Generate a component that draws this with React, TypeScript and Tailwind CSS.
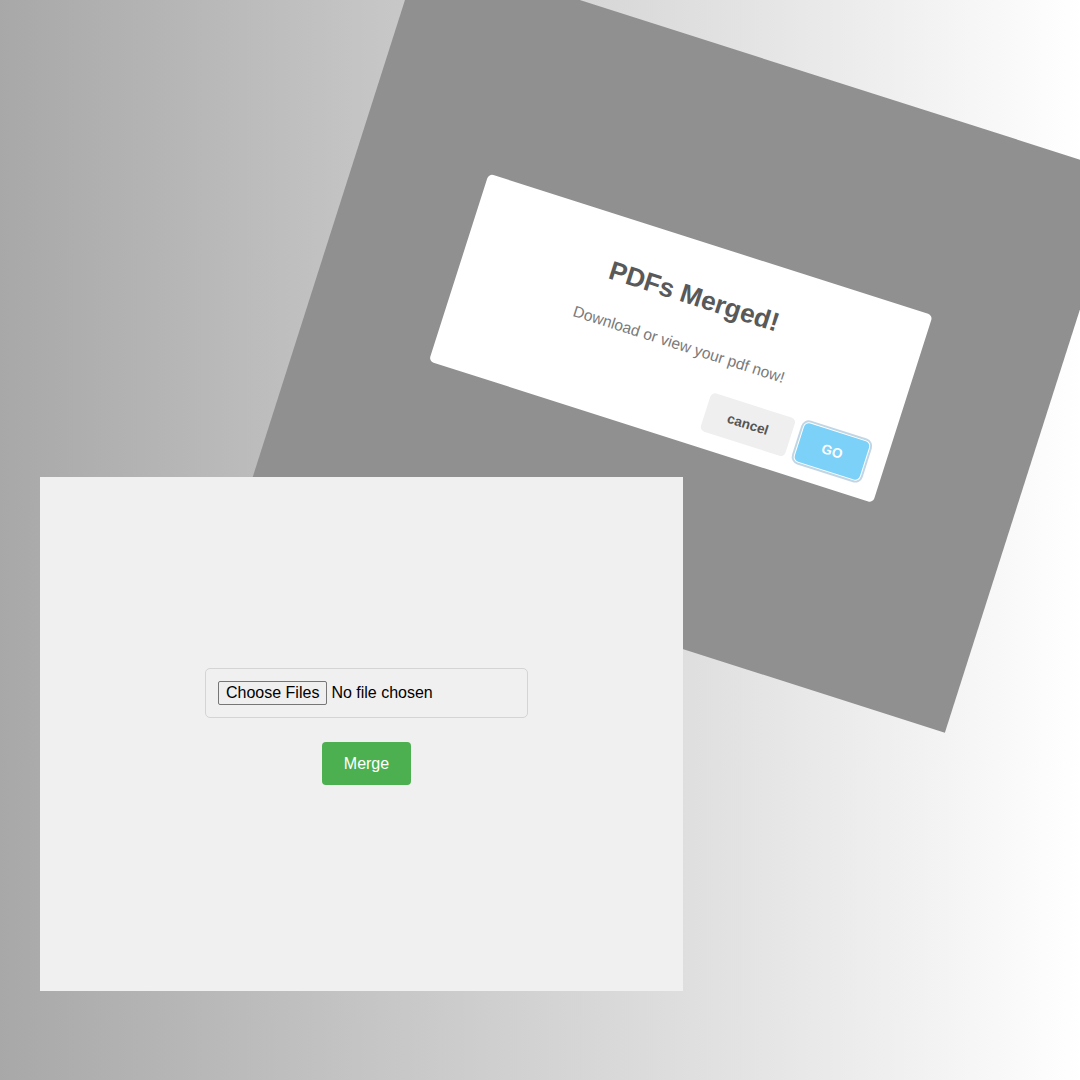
import React from 'react';

// Collage: a tilted screenshot of the "merged" alert over a gradient, and the upload panel in front of it
const font = "font-['Liberation_Sans',Arial,sans-serif]";

function MergedAlert() {
  return (
    <div className={`w-[478px] -translate-x-[3px] -translate-y-[2px] rounded-[5px] bg-white text-center ${font}`}>
      <div className="mt-[23px] mb-[7px] px-[16px] py-[13px] text-[27px] font-semibold leading-normal text-[#595959]">
        PDFs Merged!
      </div>
      <div className="inline-block px-[10px] text-[16px] leading-normal text-[#7a7a7a]">
        Download or view your pdf now!
      </div>
      <div className="mt-[6px] px-[16px] pt-[13px] pb-[12px] text-right">
        <div className="m-[5px] inline-block">
          <button className="rounded-[5px] bg-[#efefef] px-[24px] py-[10px] text-[14px] font-semibold text-[#555]">
            cancel
          </button>
        </div>
        <div className="m-[5px] inline-block">
          <button className="rounded-[5px] bg-[#7cd1f9] px-[24px] py-[10px] text-[14px] font-semibold text-white shadow-[0_0_0_1px_#fff,0_0_0_3px_rgba(43,114,165,0.29)]">
            GO
          </button>
        </div>
      </div>
    </div>
  );
}

function UploadPanel() {
  return (
    <div className={`flex h-full w-full flex-col items-center justify-center bg-[#f0f0f0] pb-[15px] pl-[10px] ${font}`}>
      <div className="flex w-[323px] items-center rounded-[5px] border border-[#d4d4d4] px-[12px] py-[12px]">
        <span className="rounded-[2px] border border-[#767676] bg-[#efefef] px-[7px] py-[2px] text-[16px] leading-[18px] text-black">
          Choose Files
        </span>
        <span className="ml-[4px] text-[16px] leading-[18px] text-black">No file chosen</span>
      </div>
      <button className="mt-[24px] rounded-[4px] bg-[#4caf50] px-[22px] py-[12px] text-[16px] leading-[19px] text-white">
        Merge
      </button>
    </div>
  );
}

export default function App() {
  return (
    <div className="relative h-[1080px] w-[1080px] overflow-hidden bg-gradient-to-r from-[#a8a8a8] to-[#ffffff]">
      {/* tilted screenshot */}
      <div className="absolute left-[305px] top-[40px] flex h-[602px] w-[756px] rotate-[17.7deg] scale-[0.975] items-center justify-center bg-[#909090]">
        <MergedAlert />
      </div>
      {/* upload window in front */}
      <div className="absolute left-[40px] top-[477px] h-[514px] w-[643px]">
        <UploadPanel />
      </div>
    </div>
  );
}
